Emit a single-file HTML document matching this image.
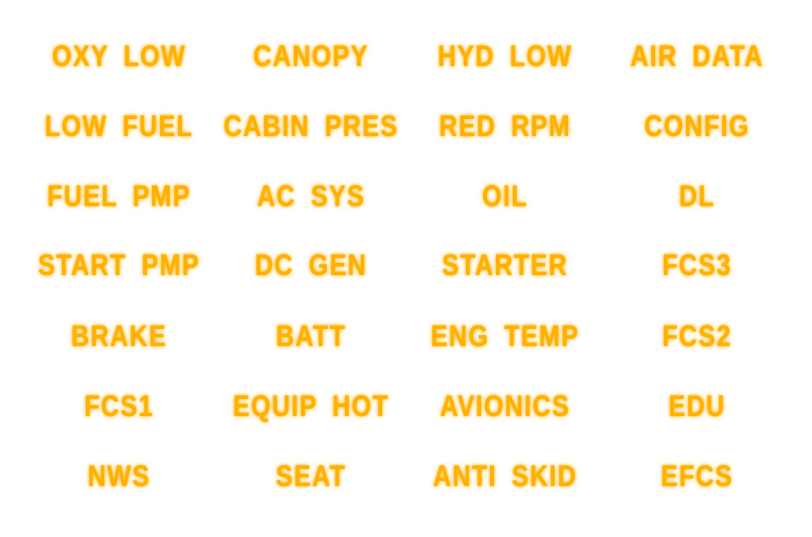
<!DOCTYPE html>
<html><head><style>
html,body{margin:0;padding:0;background:#fff;width:812px;height:537px;overflow:hidden}
.t{position:absolute;white-space:nowrap;font-family:"Liberation Sans",sans-serif;font-weight:bold;font-size:30px;letter-spacing:1.5px;word-spacing:8px;color:#ffb000;text-shadow:0 0 3px #ffb000,0 0 6px rgba(255,176,0,.6);transform:translate(-50%,-50%) scaleX(.84);line-height:1}
</style></head><body>
<div class="t" style="left:119px;top:57px">OXY LOW</div>
<div class="t" style="left:311px;top:57px">CANOPY</div>
<div class="t" style="left:505px;top:57px">HYD LOW</div>
<div class="t" style="left:697px;top:57px">AIR DATA</div>
<div class="t" style="left:119px;top:127px">LOW FUEL</div>
<div class="t" style="left:311px;top:127px">CABIN PRES</div>
<div class="t" style="left:505px;top:127px">RED RPM</div>
<div class="t" style="left:697px;top:127px">CONFIG</div>
<div class="t" style="left:119px;top:197px">FUEL PMP</div>
<div class="t" style="left:311px;top:197px">AC SYS</div>
<div class="t" style="left:505px;top:197px">OIL</div>
<div class="t" style="left:697px;top:197px">DL</div>
<div class="t" style="left:119px;top:266px">START PMP</div>
<div class="t" style="left:311px;top:266px">DC GEN</div>
<div class="t" style="left:505px;top:266px">STARTER</div>
<div class="t" style="left:697px;top:266px">FCS3</div>
<div class="t" style="left:119px;top:337px">BRAKE</div>
<div class="t" style="left:311px;top:337px">BATT</div>
<div class="t" style="left:505px;top:337px">ENG TEMP</div>
<div class="t" style="left:697px;top:337px">FCS2</div>
<div class="t" style="left:119px;top:407px">FCS1</div>
<div class="t" style="left:311px;top:407px">EQUIP HOT</div>
<div class="t" style="left:505px;top:407px">AVIONICS</div>
<div class="t" style="left:697px;top:407px">EDU</div>
<div class="t" style="left:119px;top:477px">NWS</div>
<div class="t" style="left:311px;top:477px">SEAT</div>
<div class="t" style="left:505px;top:477px">ANTI SKID</div>
<div class="t" style="left:697px;top:477px">EFCS</div>
</body></html>
